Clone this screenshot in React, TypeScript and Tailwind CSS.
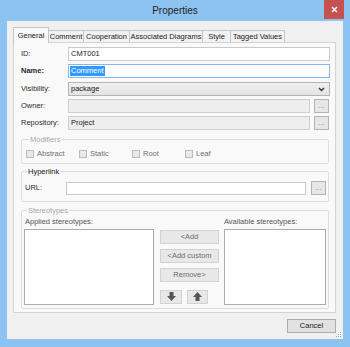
import React from 'react';

const tabs = [
  { label: 'General', w: 'w-[36px]', active: true },
  { label: 'Comment', w: 'w-[35px]', active: false },
  { label: 'Cooperation', w: 'w-[46px]', active: false },
  { label: 'Associated Diagrams', w: 'w-[73px]', active: false },
  { label: 'Style', w: 'w-[28px]', active: false },
  { label: 'Tagged Values', w: 'w-[54px]', active: false },
];

const modifiers = ['Abstract', 'Static', 'Root', 'Leaf'];

function Row({ label, bold, children }: { label: string; bold?: boolean; children: React.ReactNode }) {
  return (
    <div className="flex items-center h-[14px]">
      <div className={`w-[47px] text-[#2b2b2b] ${bold ? 'font-bold' : ''}`}>{label}</div>
      {children}
    </div>
  );
}

function DotsButton() {
  return (
    <div className="w-[15px] h-[14px] shrink-0 border border-[#b4b4b4] bg-[#e6e6e6] flex items-center justify-center text-[7px] text-[#9a7080] leading-none pb-[1px]">
      ...
    </div>
  );
}

function GrayButton({ children }: { children: React.ReactNode }) {
  return (
    <div className="h-[14px] w-full border border-[#d2d2d2] bg-[#e8e8e8] flex items-center justify-center text-[#6d6d6d]">
      {children}
    </div>
  );
}

export default function App() {
  return (
    <div className="w-[350px] h-[347px] bg-[#8cc3f0] flex flex-col font-['Liberation_Sans',Arial,sans-serif] text-[7.5px] leading-none text-[#1a1a1a] overflow-hidden">
      {/* title bar */}
      <div className="h-[21px] grid grid-cols-[1fr_auto_1fr] items-start shrink-0">
        <div />
        <div className="text-[10px] text-[#222] mt-[6px]">Properties</div>
        <div className="flex justify-end pr-[6px]">
          <div className="w-[20px] h-[19px] bg-[#c75050] flex items-center justify-center">
            <svg width="7" height="7" viewBox="0 0 7 7">
              <path d="M1 1L6 6M6 1L1 6" stroke="#fff" strokeWidth="1.4" />
            </svg>
          </div>
        </div>
      </div>

      {/* client area */}
      <div className="mx-[7px] h-[318px] bg-[#f0f0f0] relative flex flex-col pl-[6px] pr-[7px] pt-[6px]">
        {/* tabs */}
        <div className="flex items-end h-[15px]">
          {tabs.map((t) =>
            t.active ? (
              <div
                key={t.label}
                className={`${t.w} h-[16px] -mb-px relative z-10 border border-b-0 border-[#c6c6c6] bg-[#f9f9f9] flex items-center justify-center text-[#1a1a1a]`}
              >
                {t.label}
              </div>
            ) : (
              <div
                key={t.label}
                className={`${t.w} h-[12px] border-t border-r border-[#c6c6c6] bg-[#f2f2f2] flex items-center justify-center text-[#1a1a1a]`}
              >
                {t.label}
              </div>
            )
          )}
        </div>

        {/* tab page */}
        <div className="h-[271px] border border-[#d4d4d4] bg-[#f9f9f9] flex flex-col pl-[7px] pr-[5px] pt-[4px]">
          <Row label="ID:">
            <div className="flex-1 h-full border border-[#c9c9c9] bg-white flex items-center pl-[2px]">CMT001</div>
          </Row>
          <div className="mt-[3px]">
            <Row label="Name:" bold>
              <div className="flex-1 h-full border border-[#86b8ea] bg-white flex items-center pl-[1px]">
                <span className="bg-[#3399ff] text-white px-[1px] py-[1.5px]">Comment</span>
              </div>
            </Row>
          </div>
          <div className="mt-[4px]">
            <Row label="Visibility:">
              <div className="flex-1 h-full border border-[#b4b4b4] bg-gradient-to-b from-[#f0f0f0] to-[#e3e3e3] flex items-center justify-between pl-[2px] pr-[4px]">
                <span>package</span>
                <svg width="7" height="5" viewBox="0 0 7 5">
                  <path d="M1 1L3.5 3.5L6 1" fill="none" stroke="#333" strokeWidth="1.4" />
                </svg>
              </div>
            </Row>
          </div>
          <div className="mt-[3px]">
            <Row label="Owner:">
              <div className="flex-1 h-full border border-[#cfcfcf] bg-[#eeeeee]" />
              <div className="ml-[4px] mr-[1px]">
                <DotsButton />
              </div>
            </Row>
          </div>
          <div className="mt-[3px]">
            <Row label="Repository:">
              <div className="flex-1 h-full border border-[#cfcfcf] bg-[#eeeeee] flex items-center pl-[2px]">Project</div>
              <div className="ml-[4px] mr-[1px]">
                <DotsButton />
              </div>
            </Row>
          </div>

          {/* Modifiers */}
          <fieldset className="mt-[5px] mr-[1px] border border-[#dcdcdc] rounded-[2px] pl-[4px] pb-[5px]">
            <legend className="ml-[3px] px-[1px] leading-[9px] text-[#a8a8a8]">Modifiers</legend>
            <div className="flex items-center mt-[5px] h-[9px]">
              {modifiers.map((m) => (
                <div key={m} className="w-[53px] flex items-center gap-[3px]">
                  <div className="w-[8px] h-[8px] border border-[#bcbcbc] bg-[#e9e9e9]" />
                  <span className="text-[#707070]">{m}</span>
                </div>
              ))}
            </div>
          </fieldset>

          {/* Hyperlink */}
          <fieldset className="mt-[3px] mr-[1px] border border-[#dcdcdc] rounded-[2px] pl-[3px] pr-[2px] pb-[6px]">
            <legend className="ml-[2px] px-[1px] leading-[9px] text-[#1a1a1a]">Hyperlink</legend>
            <div className="flex items-center mt-[5px] h-[14px]">
              <div className="w-[41px] text-[#2b2b2b]">URL:</div>
              <div className="flex-1 h-[13px] border border-[#c9c9c9] bg-white" />
              <div className="ml-[5px]">
                <DotsButton />
              </div>
            </div>
          </fieldset>

          {/* Stereotypes */}
          <fieldset className="mt-[4px] mr-[1px] border border-[#dcdcdc] rounded-[2px] pl-[2px] pr-[2px] pb-[3px]">
            <legend className="ml-[3px] px-[1px] leading-[9px] text-[#a8a8a8]">Stereotypes</legend>
            <div className="flex mt-[3px]">
              <div className="w-[130px] flex flex-col">
                <div className="h-[9px] ml-[1px] text-[#555]">Applied stereotypes:</div>
                <div className="mt-[1.5px] h-[76px] border border-[#a9abb0] bg-white" />
              </div>
              <div className="w-[59px] ml-[6px] mt-[11.5px] flex flex-col">
                <GrayButton>&lt;Add</GrayButton>
                <div className="mt-[5px]">
                  <GrayButton>&lt;Add custom</GrayButton>
                </div>
                <div className="mt-[5px]">
                  <GrayButton>Remove&gt;</GrayButton>
                </div>
                <div className="mt-[8px] flex gap-[5px]">
                  <div className="w-[22px] h-[14px] border border-[#d2d2d2] bg-[#e8e8e8] flex items-center justify-center">
                    <svg width="9" height="9" viewBox="0 0 9 9">
                      <path d="M2.5 0H6.5V4H9L4.5 9L0 4H2.5Z" fill="#555" />
                    </svg>
                  </div>
                  <div className="w-[21px] h-[14px] border border-[#d2d2d2] bg-[#e8e8e8] flex items-center justify-center">
                    <svg width="9" height="9" viewBox="0 0 9 9">
                      <path d="M4.5 0L9 5H6.5V9H2.5V5H0Z" fill="#555" />
                    </svg>
                  </div>
                </div>
              </div>
              <div className="w-[102px] ml-[5px] flex flex-col">
                <div className="h-[9px] text-[#555]">Available stereotypes:</div>
                <div className="mt-[1.5px] h-[76px] border border-[#a9abb0] bg-white" />
              </div>
            </div>
          </fieldset>
        </div>

        {/* bottom buttons */}
        <div className="flex justify-end mt-[6px]">
          <div className="w-[49px] h-[14px] border border-[#adadad] bg-[#e1e1e1] flex items-center justify-center text-[#1a1a1a]">
            Cancel
          </div>
        </div>

        {/* size grip */}
        <svg className="absolute right-[1px] bottom-[1px]" width="6" height="6" viewBox="0 0 6 6">
          <rect x="4" y="0" width="1" height="1" fill="#aaa" />
          <rect x="2" y="2" width="1" height="1" fill="#aaa" />
          <rect x="4" y="2" width="1" height="1" fill="#aaa" />
          <rect x="0" y="4" width="1" height="1" fill="#aaa" />
          <rect x="2" y="4" width="1" height="1" fill="#aaa" />
          <rect x="4" y="4" width="1" height="1" fill="#aaa" />
        </svg>
      </div>
    </div>
  );
}
